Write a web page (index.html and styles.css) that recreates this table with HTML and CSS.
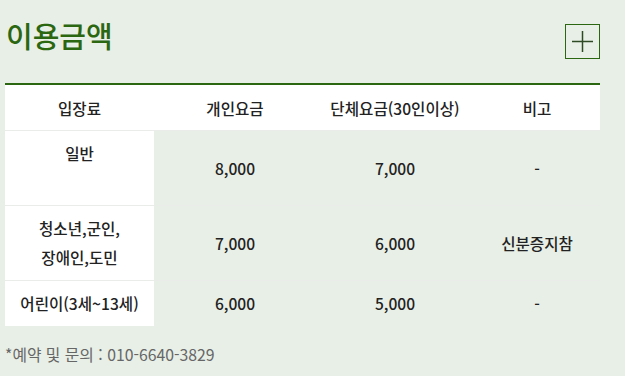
FILE: index.html
```html
<!DOCTYPE html>
<html lang="ko">
<head>
<meta charset="utf-8">
<link rel="stylesheet" href="styles.css">
</head>
<body>
<div class="wrap">
  <div class="head">
    <h2 class="title">이용금액</h2>
    <button class="plus" aria-label="더보기">
      <svg width="21" height="21" viewBox="0 0 21 21"><path d="M0 10.5H21M10.5 0V21" stroke="#2d4a24" stroke-width="1.5" fill="none"/></svg>
    </button>
  </div>
  <table class="price">
    <colgroup>
      <col class="c1"><col class="c2"><col class="c3"><col class="c4">
    </colgroup>
    <thead>
      <tr><th>입장료</th><th>개인요금</th><th>단체요금(30인이상)</th><th>비고</th></tr>
    </thead>
    <tbody>
      <tr class="tall"><td class="kind top">일반</td><td>8,000</td><td>7,000</td><td>-</td></tr>
      <tr class="tall"><td class="kind">청소년,군인,<br>장애인,도민</td><td>7,000</td><td>6,000</td><td>신분증지참</td></tr>
      <tr><td class="kind">어린이(3세~13세)</td><td>6,000</td><td>5,000</td><td>-</td></tr>
    </tbody>
  </table>
  <p class="note">*예약 및 문의 : 010-6640-3829</p>
</div>
</body>
</html>
```
FILE: styles.css
```css
html, body {
  margin: 0;
  padding: 0;
  background: #e8efe6;
}
body {
  font-family: "Noto Sans CJK KR", "Noto Sans", sans-serif;
  color: #222;
}
.wrap {
  padding: 0 25px 0 5px;
}
.head {
  display: flex;
  justify-content: space-between;
  align-items: flex-start;
  height: 83px;
}
.title {
  margin: 13px 0 0 1px;
  font-size: 29px;
  line-height: 44px;
  font-weight: 500;
  color: #2b6611;
}
.plus {
  margin-top: 24px;
  width: 35px;
  height: 35px;
  padding: 0;
  border: 1px solid #2b6611;
  background: transparent;
  display: flex;
  align-items: center;
  justify-content: center;
}
.price {
  width: 595px;
  border-collapse: collapse;
  table-layout: fixed;
  border-top: 2px solid #2b6611;
  font-size: 15.6px;
}
.c1 { width: 149px; }
.c2 { width: 162px; }
.c3 { width: 158px; }
.c4 { width: 126px; }
.price th {
  background: #fff;
  font-weight: 500;
  height: 45px;
  padding: 0;
  text-align: center;
  vertical-align: middle;
}
.price td {
  padding: 8px 0;
  line-height: 29px;
  text-align: center;
  vertical-align: middle;
  border-top: 1px solid #e9ece8;
  font-weight: 500;
}
.price tr.tall td {
  height: 58px;
}
.price td.kind {
  background: #fff;
}
.price td.top {
  vertical-align: top;
}
.note {
  margin: 17px 0 0 0;
  font-size: 15.8px;
  line-height: 24px;
  color: #666;
}
```
